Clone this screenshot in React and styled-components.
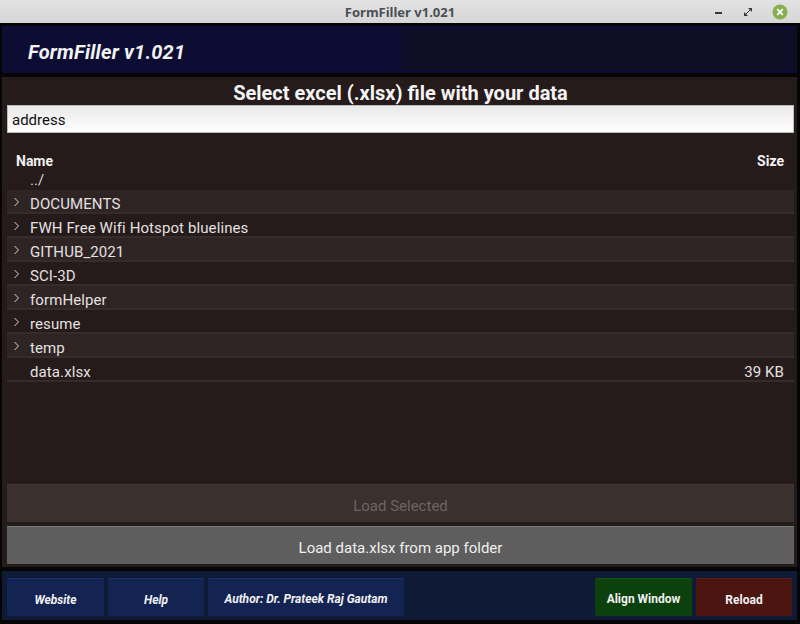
import styled, { createGlobalStyle } from "styled-components";

const GlobalStyle = createGlobalStyle`
  html, body {
    margin: 0;
    padding: 0;
    background: #000;
  }
  * {
    box-sizing: border-box;
  }
`;

const Window = styled.div`
  width: 800px;
  height: 624px;
  display: flex;
  flex-direction: column;
  background: #050505;
  font-family: Roboto, "Liberation Sans", sans-serif;
  overflow: hidden;
`;

const TitleBar = styled.div`
  height: 23px;
  flex: none;
  position: relative;
  display: flex;
  align-items: center;
  justify-content: center;
  background: linear-gradient(#e2e2e2, #d6d6d6);
  font-family: "Noto Sans", sans-serif;
  font-weight: 700;
  font-size: 13px;
  color: #4a4f57;
`;

const WinControls = styled.div`
  position: absolute;
  right: 12px;
  top: 4px;
  display: flex;
  align-items: center;
  gap: 19px;
`;

const Body = styled.div`
  flex: 1;
  display: flex;
  flex-direction: column;
  padding: 3px 3px 4px 2px;
  gap: 4px;
  min-height: 0;
`;

const Header = styled.div`
  height: 47px;
  flex: none;
  background: #0d0d33;
  display: flex;
  align-items: center;
  justify-content: space-between;
  padding: 3px 0 3px 26px;
`;

const AppName = styled.div`
  font-size: 20px;
  font-style: italic;
  font-weight: 700;
  color: #f2f2f2;
  letter-spacing: 0.2px;
  padding-top: 5px;
`;

const HeaderPanel = styled.div`
  width: 395px;
  height: 100%;
  background: #0e0f26;
`;

const Content = styled.div`
  flex: 1;
  background: #251b1b;
  display: flex;
  flex-direction: column;
  padding: 3px 3px 3px 5px;
  min-height: 0;
`;

const Heading = styled.div`
  text-align: center;
  font-size: 20px;
  font-weight: 700;
  color: #f4f4f4;
  height: 25px;
  line-height: 27px;
`;

const AddressInput = styled.div`
  height: 28px;
  background: linear-gradient(#e9e9e9, #ffffff);
  border: 1px solid #bdbdbd;
  color: #111;
  font-size: 15px;
  display: flex;
  align-items: center;
  padding: 2px 0 0 4px;
`;

const ListHead = styled.div`
  display: flex;
  justify-content: space-between;
  padding: 20px 10px 0 9px;
  font-size: 14px;
  font-weight: 700;
  color: #f2f2f2;
  height: 38px;
`;

const ParentRow = styled.div`
  height: 19px;
  padding: 3px 0 0 23px;
  font-size: 15px;
  color: #d8d8d8;
  line-height: 12px;
`;

const Row = styled.div`
  height: 24px;
  display: flex;
  align-items: center;
  padding-top: 6px;
  background: ${(p) => (p.$alt ? "#2e2424" : "#251b1b")};
  border-bottom: 2px solid #352c2c;
  font-size: 15px;
  letter-spacing: 0.1px;
  color: #e4e0e0;
  padding-right: 10px;
`;

const Arrow = styled.span`
  width: 23px;
  flex: none;
  display: flex;
  padding: 0 0 5px 6px;
`;

const FileName = styled.span`
  flex: 1;
`;

const Spacer = styled.div`
  flex: 1;
`;

const WideButton = styled.div`
  height: 38px;
  flex: none;
  display: flex;
  align-items: center;
  justify-content: center;
  padding-top: 4px;
  font-size: 15px;
  background: ${(p) => (p.$disabled ? "#3a302e" : "#5e5e5e")};
  color: ${(p) => (p.$disabled ? "#6e6464" : "#f0f0f0")};
  border-top: 1px solid ${(p) => (p.$disabled ? "#433836" : "#787878")};
  margin-top: ${(p) => (p.$gap ? "4px" : "0")};
`;

const Footer = styled.div`
  height: 49px;
  flex: none;
  background: #0f1a36;
  display: flex;
  align-items: flex-start;
  padding: 7px 5px 0 5px;
  gap: 4px;
`;

const FootButton = styled.div`
  width: ${(p) => p.$w}px;
  height: 38px;
  display: flex;
  align-items: center;
  justify-content: center;
  padding-top: ${(p) => p.$pt || 3}px;
  font-size: 12px;
  font-weight: 700;
  font-style: ${(p) => (p.$plain ? "normal" : "italic")};
  color: #f0f0f0;
  border-radius: 2px;
  border-top: 1px solid ${(p) => p.$edge};
  background: ${(p) => p.$bg};
`;

const FootGap = styled.div`
  flex: 1;
`;

function Chevron() {
  return (
    <svg width="7" height="10" viewBox="0 0 7 10">
      <path d="M1.5 1 L5.5 5 L1.5 9" fill="none" stroke="#d6d6d6" strokeWidth="1" />
    </svg>
  );
}

const items = [
  { name: "DOCUMENTS", dir: true },
  { name: "FWH Free Wifi Hotspot bluelines", dir: true },
  { name: "GITHUB_2021", dir: true },
  { name: "SCI-3D", dir: true },
  { name: "formHelper", dir: true },
  { name: "resume", dir: true },
  { name: "temp", dir: true },
  { name: "data.xlsx", size: "39 KB" },
];

export default function App() {
  return (
    <>
      <GlobalStyle />
      <Window>
        <TitleBar>
          FormFiller v1.021
          <WinControls>
            <svg width="10" height="10" viewBox="0 0 10 10">
              <rect x="1" y="5" width="7" height="2" fill="#3a3a3a" />
            </svg>
            <svg width="10" height="10" viewBox="0 0 10 10">
              <path d="M5 1 L9 1 L9 5 Z M1 5 L1 9 L5 9 Z" fill="#3a3a3a" />
              <path d="M3 7 L7 3" stroke="#3a3a3a" strokeWidth="1" />
            </svg>
            <svg width="16" height="16" viewBox="0 0 16 16">
              <circle cx="8" cy="8" r="7.5" fill="#86b04f" />
              <path d="M5.2 5.2 L10.8 10.8 M10.8 5.2 L5.2 10.8" stroke="#fff" strokeWidth="1.8" />
            </svg>
          </WinControls>
        </TitleBar>
        <Body>
          <Header>
            <AppName>FormFiller v1.021</AppName>
            <HeaderPanel />
          </Header>
          <Content>
            <Heading>Select excel (.xlsx) file with your data</Heading>
            <AddressInput>address</AddressInput>
            <ListHead>
              <span>Name</span>
              <span>Size</span>
            </ListHead>
            <ParentRow>../</ParentRow>
            {items.map((it, i) => (
              <Row key={it.name} $alt={i % 2 === 0}>
                <Arrow>{it.dir ? <Chevron /> : null}</Arrow>
                <FileName>{it.name}</FileName>
                {it.size && <span>{it.size}</span>}
              </Row>
            ))}
            <Spacer />
            <WideButton $disabled>Load Selected</WideButton>
            <WideButton $gap>Load data.xlsx from app folder</WideButton>
          </Content>
          <Footer>
            <FootButton $w={97} $bg="#142452" $edge="#1d3270" $pt={5}>Website</FootButton>
            <FootButton $w={96} $bg="#142452" $edge="#1d3270" $pt={4}>Help</FootButton>
            <FootButton $w={196} $bg="#142452" $edge="#1d3270" $pt={2}>Author: Dr. Prateek Raj Gautam</FootButton>
            <FootGap />
            <FootButton $w={97} $bg="#0c400d" $edge="#145514" $plain $pt={2}>Align Window</FootButton>
            <FootButton $w={96} $bg="#4b1510" $edge="#5e1d17" $plain $pt={4}>Reload</FootButton>
          </Footer>
        </Body>
      </Window>
    </>
  );
}
